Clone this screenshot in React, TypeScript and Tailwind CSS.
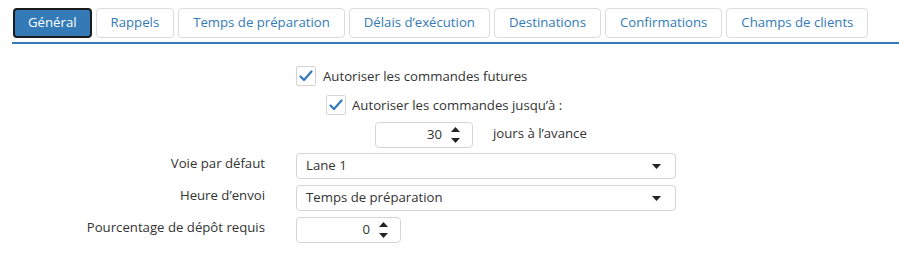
import { useState } from "react";

const tabs = [
  "Général",
  "Rappels",
  "Temps de préparation",
  "Délais d’exécution",
  "Destinations",
  "Confirmations",
  "Champs de clients",
];

const Check = () => (
  <span className="flex items-center justify-center w-[20px] h-[20px] border border-[#d4d4d4] rounded-[2px] bg-white">
    <svg className="w-[16px] h-[16px]" viewBox="0 0 16 16" fill="none">
      <path d="M2.5 8.5l3.5 3.5 7.5-8.5" stroke="#3479c0" strokeWidth={2.2} strokeLinecap="round" strokeLinejoin="round" />
    </svg>
  </span>
);

const Spinner = () => (
  <span className="flex flex-col items-center gap-[6px]">
    <svg width="9" height="5" viewBox="0 0 9 5"><path d="M0 5L4.5 0 9 5z" fill="#222" /></svg>
    <svg width="9" height="5" viewBox="0 0 9 5"><path d="M0 0L4.5 5 9 0z" fill="#222" /></svg>
  </span>
);

const Caret = () => (
  <svg width="9" height="5" viewBox="0 0 9 5"><path d="M0 0L4.5 5 9 0z" fill="#222" /></svg>
);

export default function App() {
  const [active] = useState(0);

  return (
    <div className="w-[899px] h-[267px] bg-white text-[13.2px] text-[#333] font-['Open_Sans',sans-serif]">
      {/* Tabs */}
      <div className="pt-[8px] pl-[13px] flex gap-[4px]">
        {tabs.map((t, i) => (
          <div
            key={t}
            className={
              i === active
                ? "h-[30px] px-[13px] flex items-center rounded-[4px] border-2 border-[#1b1b1b] bg-[#337ab7] text-white"
                : "h-[30px] px-[14px] flex items-center rounded-[4px] border border-[#dcdcdc] bg-white text-[#337ab7]"
            }
          >
            {t}
          </div>
        ))}
      </div>
      <div className="ml-[12px] mt-[4px] h-[2px] bg-[#337ab7]" />

      {/* Options */}
      <div className="mt-[21px] pl-[296px]">
        <div className="flex items-center gap-[7px] h-[22px]">
          <Check />
          <span className="mt-[2px]">Autoriser les commandes futures</span>
        </div>
        <div className="flex items-center gap-[6px] h-[22px] ml-[30px] mt-[7px]">
          <Check />
          <span className="mt-[1px]">Autoriser les commandes jusqu’à :</span>
        </div>
        <div className="flex items-center ml-[79px] mt-[6px]">
          <div className="w-[98px] h-[26px] border border-[#d4d4d4] rounded-[4px] flex items-center justify-end gap-[9px] pr-[12px]">
            <span>30</span>
            <Spinner />
          </div>
          <span className="ml-[20px] -mt-[3px]">jours à l’avance</span>
        </div>
      </div>

      {/* Form */}
      <div className="mt-[5px] grid grid-cols-[265px_380px] gap-x-[31px] gap-y-[6px] items-center">
        <div className="text-right -mt-[4px]">Voie par défaut</div>
        <div className="h-[26px] border border-[#d4d4d4] rounded-[4px] flex items-center justify-between pl-[9px] pr-[14px]">
          <span>Lane 1</span>
          <Caret />
        </div>
        <div className="text-right -mt-[5px]">Heure d’envoi</div>
        <div className="h-[26px] border border-[#d4d4d4] rounded-[4px] flex items-center justify-between pl-[9px] pr-[14px]">
          <span>Temps de préparation</span>
          <Caret />
        </div>
        <div className="text-right -mt-[5px]">Pourcentage de dépôt requis</div>
        <div className="w-[105px] h-[26px] border border-[#d4d4d4] rounded-[4px] flex items-center justify-end gap-[9px] pr-[12px]">
          <span>0</span>
          <Spinner />
        </div>
      </div>
    </div>
  );
}
